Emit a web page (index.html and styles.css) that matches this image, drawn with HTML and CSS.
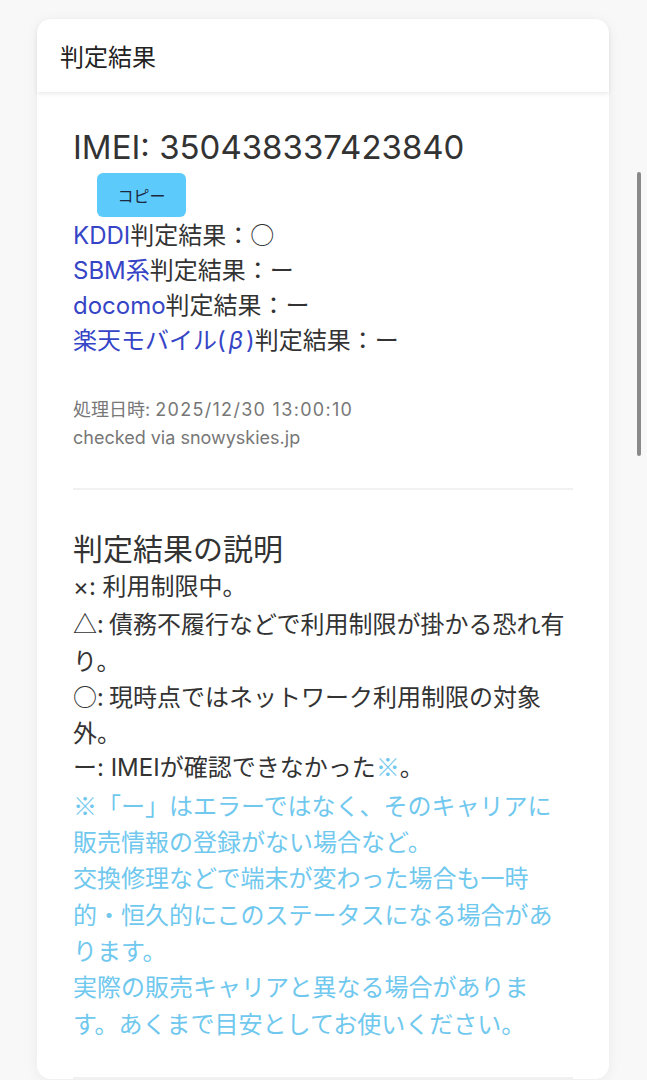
FILE: index.html
```html
<!DOCTYPE html>
<html lang="ja">
<head>
<meta charset="utf-8">
<title>判定結果</title>
<link rel="stylesheet" href="styles.css">
</head>
<body>
<div class="page">
  <div class="prev-card"></div>
  <section class="card">
    <header class="card-header">判定結果</header>
    <div class="card-body">
      <div class="result">
        <h2 class="imei">IMEI: 350438337423840</h2>
        <button class="copy-btn">コピー</button>
        <ul class="carriers">
          <li><a class="link">KDDI</a>判定結果：<span class="sym">○</span></li>
          <li><a class="link">SBM系</a>判定結果：ー</li>
          <li><a class="link">docomo</a>判定結果：ー</li>
          <li><a class="link">楽天モバイル(<span class="beta">β</span>)</a>判定結果：ー</li>
        </ul>
        <div class="meta">
          <div>処理日時: <span class="date">2025/12/30 13:00:10</span></div>
          <div>checked via snowyskies.jp</div>
        </div>
      </div>
      <hr class="divider">
      <div class="explain">
        <h3 class="explain-title">判定結果の説明</h3>
        <p class="line">×: 利用制限中。</p>
        <p class="line jp">△: 債務不履行などで利用制限が掛かる恐れ有り。</p>
        <p class="line jp">○: 現時点ではネットワーク利用制限の対象外。</p>
        <p class="line">ー: IMEIが確認できなかった<span class="note sym">※</span>。</p>
        <p class="line note jp">※「ー」はエラーではなく、そのキャリアに販売情報の登録がない場合など。</p>
        <p class="line note jp">交換修理などで端末が変わった場合も一時的・恒久的にこのステータスになる場合があります。</p>
        <p class="line note jp">実際の販売キャリアと異なる場合があります。あくまで目安としてお使いください。</p>
      </div>
      <hr class="divider">
    </div>
  </section>
</div>
<div class="scrollbar"></div>
</body>
</html>
```

FILE: styles.css
```css
html, body {
  margin: 0;
  padding: 0;
  background: #f8f8f8;
  font-family: "Inter", "Noto Sans CJK JP", sans-serif;
  color: #333;
}

.jp {
  font-family: "Noto Sans CJK JP", sans-serif;
}

.sym {
  font-family: "Noto Sans CJK JP", sans-serif;
  line-height: 1;
}

.page {
  padding: 19px 38px 40px 37px;
}

.prev-card {
  height: 0;
  margin-top: -19px;
  margin-bottom: 19px;
  box-shadow: 0 2px 14px rgba(0, 0, 0, 0.08);
}

.card {
  background: #fff;
  border-radius: 14px;
  box-shadow: 0 2px 14px rgba(0, 0, 0, 0.06);
}

.card-header {
  height: 73px;
  display: flex;
  align-items: center;
  padding-left: 23px;
  font-family: "Noto Sans CJK JP", sans-serif;
  font-size: 24px;
  color: #222;
  border-radius: 14px 14px 0 0;
  box-shadow: 0 2px 4px rgba(0, 0, 0, 0.08);
  position: relative;
}

.card-body {
  padding: 33px 36px 0 36px;
}

.imei {
  margin: 0;
  font-size: 33px;
  font-weight: 400;
  line-height: 44px;
  color: #333;
}

.copy-btn {
  display: block;
  margin: 4px 0 0 24px;
  width: 89px;
  height: 44px;
  border: none;
  border-radius: 6px;
  background: #5ccbfb;
  color: #1b2840;
  font-family: "Noto Sans CJK JP", sans-serif;
  font-size: 16px;
  padding: 0;
}

.carriers {
  list-style: none;
  margin: 1px 0 0;
  padding: 0;
  font-size: 24px;
  line-height: 35px;
}

.link {
  color: #3645c6;
}

.beta {
  font-style: italic;
  padding: 0 3px;
}

.meta {
  margin-top: 38px;
  font-size: 18px;
  line-height: 28px;
  color: #777;
}

.date {
  letter-spacing: 1.3px;
}

.divider {
  border: none;
  border-top: 2px solid #f1f1f1;
  margin: 36px 0 0;
}

.explain {
  padding-top: 38px;
  padding-bottom: 36px;
}

.explain-title {
  margin: 0 0 3px;
  font-family: "Noto Sans CJK JP", sans-serif;
  font-size: 30px;
  font-weight: 400;
  line-height: 38px;
  color: #333;
}

.line {
  margin: 0;
  font-size: 24px;
  line-height: 36.3px;
  width: 500px;
}

.note {
  color: #70c8ee;
}

.explain + .divider {
  margin-top: 0;
}

.scrollbar {
  position: fixed;
  right: 6px;
  top: 172px;
  width: 4px;
  height: 284px;
  border-radius: 2px;
  background: #8a8a8a;
}
```
